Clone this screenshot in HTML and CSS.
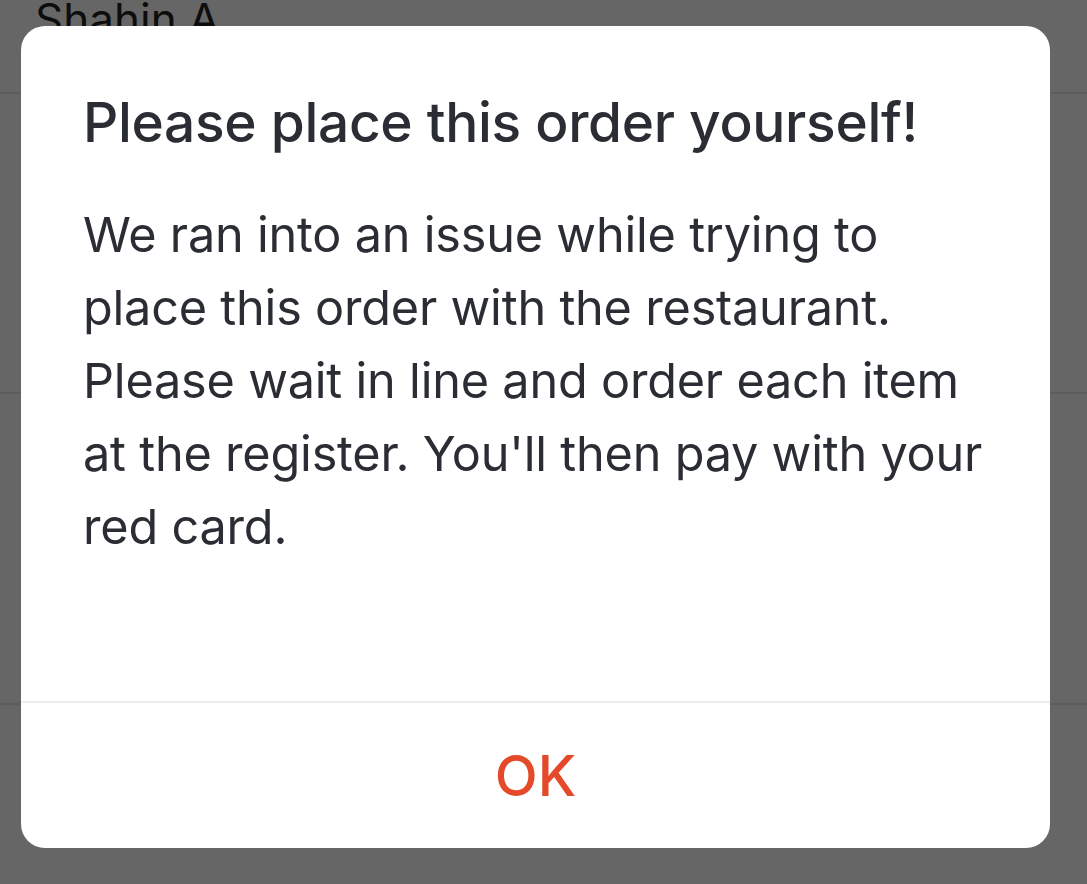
FILE: index.html
```html
<!DOCTYPE html>
<html>
<head>
<meta charset="utf-8">
<link rel="stylesheet" href="styles.css">
</head>
<body>
<div class="backdrop">
  <div class="row row-head"><span class="name">Shahin A</span></div>
  <div class="row row-mid"></div>
  <div class="row row-low"></div>
</div>
<div class="alert">
  <div class="alert-body">
    <h1 class="alert-title">Please place this order yourself!</h1>
    <p class="alert-msg">We ran into an issue while trying to<br>place this order with the restaurant.<br>Please wait in line and order each item<br>at the register. You'll then pay with your<br>red card.</p>
  </div>
  <div class="alert-actions">
    <button class="alert-btn">OK</button>
  </div>
</div>
</body>
</html>
```
FILE: styles.css
```css
html, body {
  margin: 0;
  padding: 0;
  width: 1087px;
  height: 884px;
  overflow: hidden;
  background: #666666;
  font-family: Inter, "Noto Sans", sans-serif;
}
.backdrop {
  display: flex;
  flex-direction: column;
}
.row {
  border-bottom: 2px solid #5d5d5d;
  box-sizing: border-box;
}
.row-head {
  height: 94px;
  padding-left: 35px;
}
.name {
  display: block;
  font-size: 44px;
  line-height: 44px;
  margin-top: -3px;
  color: #0d0d0d;
}
.row-mid {
  height: 300px;
}
.row-low {
  height: 311px;
}
.alert {
  position: absolute;
  left: 21px;
  top: 26px;
  width: 1029px;
  height: 822px;
  background: #ffffff;
  border-radius: 24px;
  display: flex;
  flex-direction: column;
  overflow: hidden;
}
.alert-body {
  flex: 1;
  padding: 0 20px 0 62px;
}
.alert-title {
  margin: 62px 0 0;
  font-size: 55px;
  line-height: 68px;
  font-weight: 500;
  color: #2b2d34;
  letter-spacing: -0.3px;
  white-space: nowrap;
}
.alert-msg {
  margin: 42px 0 0;
  font-size: 48.6px;
  line-height: 73px;
  font-weight: 400;
  color: #2b2d34;
  letter-spacing: -0.2px;
  white-space: nowrap;
}
.alert-actions {
  height: 145px;
  border-top: 2px solid #ececec;
  display: flex;
  align-items: center;
  justify-content: center;
}
.alert-btn {
  border: none;
  background: none;
  font-family: Inter, "Noto Sans", sans-serif;
  font-size: 56px;
  font-weight: 500;
  color: #e44a2a;
  padding: 0;
}
```
